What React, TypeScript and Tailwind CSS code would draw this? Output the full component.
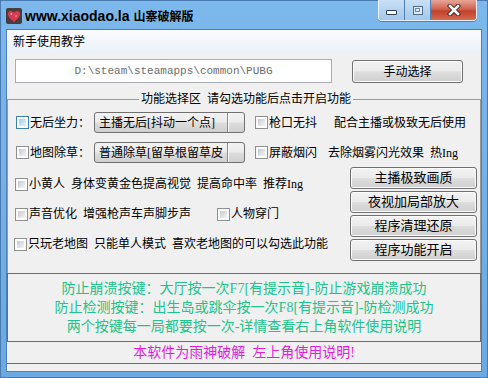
import type { ReactNode } from 'react';

const UI = "[font-family:'Liberation_Serif','Noto_Sans_CJK_SC',serif]";

function Check({ hot }: { hot?: boolean }) {
  return (
    <span
      className={`flex h-[13px] w-[13px] shrink-0 border bg-white p-[2px] ${
        hot ? 'border-[#3c7fb1]' : 'border-[#8e8f8f]'
      }`}
    >
      <span
        className={`flex-1 ${
          hot
            ? 'bg-[linear-gradient(135deg,#9fd0f3,#e6f3fc)]'
            : 'bg-[linear-gradient(135deg,#c6cad0,#f4f4f4)]'
        }`}
      />
    </span>
  );
}

function Btn({ children, className = '' }: { children: ReactNode; className?: string }) {
  return (
    <div
      className={`flex shrink-0 items-center justify-center rounded-[3px] border border-[#707070] bg-[linear-gradient(#f2f2f2_0%,#ebebeb_48%,#dddddd_52%,#cfcfcf_100%)] shadow-[inset_0_0_0_1px_#fbfbfb] text-[13px] text-black ${className}`}
    >
      {children}
    </div>
  );
}

function Combo({ text }: { text: string }) {
  return (
    <div className="ml-[4px] flex h-[21px] w-[151px] shrink-0 overflow-hidden rounded-[3px] border border-[#707070] bg-[linear-gradient(#f2f2f2_0%,#ebebeb_48%,#dddddd_52%,#cfcfcf_100%)]">
      <div className="flex flex-1 items-center overflow-hidden whitespace-nowrap pl-[4px] text-[12px]">
        {text}
      </div>
      <div className="w-[17px] border-l border-[#8a8a8a] shadow-[inset_1px_0_0_#fbfbfb]" />
    </div>
  );
}

function HeartIcon() {
  return (
    <svg width="16" height="16" viewBox="0 0 16 16">
      <rect x="0" y="0" width="16" height="16" rx="2" fill="#4a3b3d" />
      <path
        d="M8 14 C3 10 1.5 7.5 2 5 C2.6 2.6 5.6 2 8 4.6 C10.4 2 13.4 2.6 14 5 C14.5 7.5 13 10 8 14 Z"
        fill="#d83a52"
      />
      <circle cx="5.5" cy="6" r="1" fill="#f7b5c0" />
      <circle cx="10" cy="8" r="0.8" fill="#f7b5c0" />
    </svg>
  );
}

function Row({ children }: { children: ReactNode }) {
  return <div className="flex h-[30px] items-center whitespace-nowrap text-[12px]">{children}</div>;
}

export default function App() {
  return (
    <div className={`flex h-[378px] w-[488px] flex-col bg-[linear-gradient(#7cb8ec,#6aa9e2)] shadow-[inset_0_0_0_1px_#4a7bb0] ${UI}`}>
      {/* title bar */}
      <div className="flex h-[29px] shrink-0 items-start">
        <div className="ml-[6px] mt-[8px]">
          <HeartIcon />
        </div>
        <div className="ml-[3px] mt-[8px] flex items-center font-bold text-black">
          <span className="text-[14px] leading-[16px] [font-family:'Liberation_Sans',sans-serif]">www.xiaodao.la</span>
          <span className="ml-[4px] text-[12px] leading-[16px] [font-family:'Noto_Sans_CJK_SC',sans-serif]">山寨破解版</span>
        </div>
        <div className="ml-auto mr-[11px] flex h-[21px] overflow-hidden rounded-b-[4px] border border-t-0 border-[#e8f2fb] shadow-[0_1px_0_#4d80b4]">
          <div className="flex w-[26px] items-center justify-center border-r border-[#4d80b4] bg-[linear-gradient(#c9e0f5,#a3c8ec)]">
            <span className="mt-[5px] h-[5px] w-[11px] rounded-[1px] border border-[#2c3e55] bg-white" />
          </div>
          <div className="flex w-[26px] items-center justify-center border-r border-[#4d80b4] bg-[linear-gradient(#c9e0f5,#a3c8ec)]">
            <span className="flex h-[9px] w-[10px] items-center justify-center border border-[#4f6a8a] bg-[#dcebf8]">
              <span className="h-[4px] w-[5px] border border-[#6f88a6]" />
            </span>
          </div>
          <div className="flex w-[45px] items-center justify-center bg-[linear-gradient(#e8a597_0%,#d0644f_45%,#c2412d_55%,#d46a4f_100%)]">
            <svg width="14" height="12" viewBox="0 0 14 12">
              <path d="M3 2 L11 10 M11 2 L3 10" stroke="#4a1a14" strokeWidth="4.4" strokeLinecap="square" />
              <path d="M3 2 L11 10 M11 2 L3 10" stroke="#ffffff" strokeWidth="2.6" strokeLinecap="square" />
            </svg>
          </div>
        </div>
      </div>

      {/* client */}
      <div className="mx-[6px] flex flex-1 flex-col border border-[#4f7fb3] bg-[#f0f0f0]">
        <div className="flex h-[23px] shrink-0 items-center bg-[linear-gradient(#fbfcfe,#e9f0f8)] pl-[6px] text-[12px] text-black">
          新手使用教学
        </div>

        <div className="mt-[6px] flex shrink-0 items-start">
          <div className="ml-[8px] flex h-[24px] w-[317px] items-center justify-center border border-[#abadb3] bg-white text-[11px] text-[#6d6d6d] [font-family:'Liberation_Mono',monospace]">
            D:\steam\steamapps\common\PUBG
          </div>
          <Btn className="ml-[20px] mt-[1px] h-[23px] w-[111px] !text-[12px]">手动选择</Btn>
        </div>

        {/* group box */}
        <div className="mt-[8px] flex shrink-0 flex-col">
          <div className="flex h-[16px] items-end">
            <div className="h-[8px] w-[132px] border-l border-t border-[#9a9a9a]" />
            <span className="self-center px-[2px] text-[12px] leading-[16px] text-black">
              功能选择区&ensp;请勾选功能后点击开启功能
            </span>
            <div className="h-[8px] flex-1 border-r border-t border-[#9a9a9a]" />
          </div>
          <div className="flex flex-col border-l border-r border-[#9a9a9a]">
            <div className="mt-[5px] flex h-[21px] items-center whitespace-nowrap text-[12px]">
              <span className="ml-[8px]"><Check hot /></span>
              <span className="ml-[1px]">无后坐力：</span>
              <Combo text="主播无后[抖动一个点]" />
              <span className="ml-[10px]"><Check /></span>
              <span className="ml-[1px]">枪口无抖</span>
              <span className="ml-[17px]">配合主播或极致无后使用</span>
            </div>
            <div className="mt-[9px] flex h-[21px] items-center whitespace-nowrap text-[12px]">
              <span className="ml-[8px]"><Check /></span>
              <span className="ml-[1px]">地图除草：</span>
              <Combo text="普通除草[留草根留草皮" />
              <span className="ml-[10px]"><Check /></span>
              <span className="ml-[1px]">屏蔽烟闪</span>
              <span className="ml-[11px]">去除烟雾闪光效果&ensp;热Ing</span>
            </div>

            <div className="mt-[4px] flex">
              <div className="flex flex-1 flex-col pt-[2px]">
                <Row>
                  <span className="ml-[7px]"><Check /></span>
                  <span className="ml-[1px]">小黄人&ensp;身体变黄金色提高视觉&ensp;提高命中率&ensp;推荐Ing</span>
                </Row>
                <Row>
                  <span className="ml-[7px]"><Check /></span>
                  <span className="ml-[1px]">声音优化&ensp;增强枪声车声脚步声</span>
                  <span className="ml-[26px]"><Check /></span>
                  <span className="ml-[1px]">人物穿门</span>
                </Row>
                <Row>
                  <span className="ml-[6px]"><Check /></span>
                  <span className="ml-[1px]">只玩老地图&ensp;只能单人模式&ensp;喜欢老地图的可以勾选此功能</span>
                </Row>
              </div>
              <div className="mr-[3px] flex w-[127px] flex-col gap-[2px]">
                <Btn className="h-[22px]">主播极致画质</Btn>
                <Btn className="h-[22px]">夜视加局部放大</Btn>
                <Btn className="h-[22px]">程序清理还原</Btn>
                <Btn className="h-[22px]">程序功能开启</Btn>
              </div>
            </div>
            <div className="h-[12px]" />
          </div>
        </div>

        {/* info panels */}
        <div className="flex h-[69px] shrink-0 flex-col items-center justify-center border border-[#6d6d6d] text-[14px] leading-[19px] text-[#20c48a]">
          <div>防止崩溃按键：大厅按一次F7[有提示音]-防止游戏崩溃成功</div>
          <div>防止检测按键：出生岛或跳伞按一次F8[有提示音]-防检测成功</div>
          <div>两个按键每一局都要按一次-详情查看右上角软件使用说明</div>
        </div>
        <div className="flex h-[22px] shrink-0 items-center justify-center border-b border-[#6d6d6d] text-[14px] text-[#e01ee0]">
          本软件为雨神破解&ensp;左上角使用说明!
        </div>
      </div>
      <div className="h-[6px] shrink-0" />
    </div>
  );
}
